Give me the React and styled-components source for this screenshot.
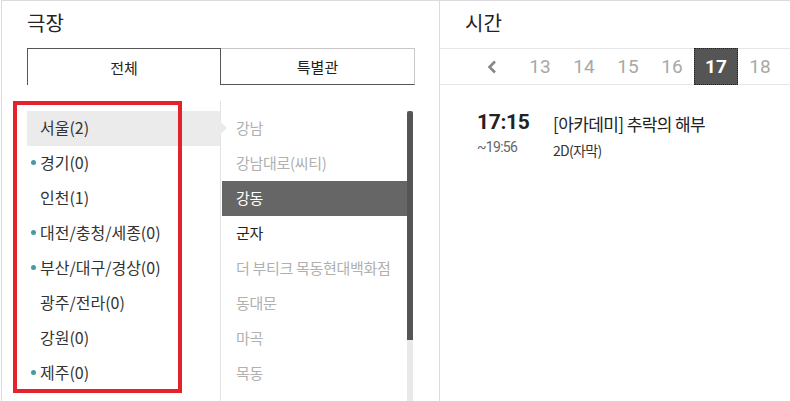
import React from "react";
import styled, { createGlobalStyle } from "styled-components";

const Global = createGlobalStyle`
  html, body { margin: 0; padding: 0; overflow: hidden; background: #fff; }
  body { font-family: "Noto Sans CJK KR", "Noto Sans", sans-serif; color: #222; }
  * { box-sizing: border-box; }
`;

const Page = styled.div`
  display: flex;
  margin-left: 1px;
  height: 401px;
  border-top: 1px solid #dcdcdc;
  border-left: 1px solid #dcdcdc;
  overflow: hidden;
`;

const LeftPanel = styled.section`
  width: 438px;
  flex: none;
  padding-left: 25px;
  border-right: 1px solid #dcdcdc;
`;

const RightPanel = styled.section`
  flex: 1;
  min-width: 0;
`;

const Title = styled.h2`
  margin: 0;
  height: 47px;
  line-height: 44px;
  font-size: 20px;
  font-weight: 400;
  color: #222;
  padding-left: ${(p) => p.$indent || 0}px;
`;

const Tabs = styled.div`
  display: grid;
  grid-template-columns: 194px 194px;
  height: 37px;
`;

const Tab = styled.div`
  display: flex;
  align-items: center;
  justify-content: center;
  font-size: 15px;
  color: #222;
  border: 1px solid ${(p) => (p.$active ? "#555" : "#c8c8c8")};
  border-bottom: ${(p) => (p.$active ? "none" : "1px solid #555")};
  border-left: ${(p) => (p.$active ? "1px solid #555" : "none")};
`;

const Body = styled.div`
  position: relative;
  display: flex;
  margin-top: 16px;
  height: 300px;
`;

const RegionList = styled.ul`
  list-style: none;
  margin: 0;
  padding: 10px 0 0;
  width: 193px;
  flex: none;
`;

const RegionItem = styled.li`
  position: relative;
  height: 35px;
  line-height: 32px;
  padding: 0 0 3px 13px;
  font-size: 16px;
  color: #333;
  background: ${(p) => (p.$active ? "#ebebeb" : "transparent")};
  ${(p) =>
    p.$active &&
    `
    &::after {
      content: "";
      position: absolute;
      right: -7px;
      top: 10px;
      border-top: 7px solid transparent;
      border-bottom: 7px solid transparent;
      border-left: 7px solid #ebebeb;
      z-index: 2;
    }
  `}
  ${(p) =>
    p.$dot &&
    `
    &::before {
      content: "";
      position: absolute;
      left: 4px;
      top: 14px;
      width: 5px;
      height: 5px;
      border-radius: 50%;
      background: #4b97a2;
    }
  `}
`;

const TheaterColumn = styled.div`
  display: flex;
  border-left: 1px solid #e3e3e3;
  padding-left: 1px;
`;

const TheaterList = styled.ul`
  list-style: none;
  margin: 0;
  padding: 10px 0 0;
  width: 185px;
`;

const TheaterItem = styled.li`
  height: 35px;
  line-height: 33px;
  padding-left: 14px;
  font-size: 15px;
  white-space: nowrap;
  overflow: hidden;
  letter-spacing: -0.3px;
  color: ${(p) => (p.$active ? "#fff" : p.$disabled ? "#b0b0b0" : "#222")};
  background: ${(p) => (p.$active ? "#666" : "transparent")};
`;

const ScrollTrack = styled.div`
  margin-top: 10px;
  width: 6px;
  background: #e9e9e9;
  height: 300px;
`;

const ScrollThumb = styled.div`
  height: 229px;
  background: #555;
  border-radius: 2px 2px 0 0;
`;

const Annotation = styled.div`
  position: absolute;
  left: -14px;
  top: 0;
  width: 169px;
  height: 292px;
  border: 4px solid #e3222b;
  pointer-events: none;
  z-index: 3;
`;

const DateBar = styled.div`
  display: flex;
  align-items: stretch;
  height: 37px;
  padding-left: 30px;
  border-top: 1px solid #e6e6e6;
  border-bottom: 1px solid #e6e6e6;
`;

const DateCell = styled.div`
  width: ${(p) => (p.$nav ? 48 : 44)}px;
  padding-right: ${(p) => (p.$nav ? 4 : 0)}px;
  flex: none;
  display: flex;
  align-items: center;
  justify-content: center;
  font-family: Roboto, "Noto Sans", sans-serif;
  font-size: 19px;
  color: ${(p) => (p.$active ? "#fff" : "#a8a8a8")};
  font-weight: ${(p) => (p.$active ? 700 : 400)};
  background: ${(p) => (p.$active ? "#555" : "transparent")};
  margin: ${(p) => (p.$active ? "-1px 0" : "0")};
  outline: ${(p) => (p.$active ? "1px dotted #222" : "none")};
  outline-offset: -1px;
`;

const Showtime = styled.div`
  display: grid;
  grid-template-columns: 76px 1fr;
  padding: 25px 0 0 37px;
`;

const TimeCol = styled.div`
  display: flex;
  flex-direction: column;
`;

const StartTime = styled.div`
  font-family: Roboto, "Noto Sans", sans-serif;
  font-weight: 700;
  font-size: 21px;
  line-height: 24px;
  color: #222;
  letter-spacing: -0.3px;
`;

const EndTime = styled.div`
  margin-top: 5px;
  font-family: Roboto, "Noto Sans", sans-serif;
  font-size: 14px;
  line-height: 16px;
  color: #666;
  letter-spacing: -0.7px;
`;

const MovieCol = styled.div`
  display: flex;
  flex-direction: column;
`;

const MovieTitle = styled.div`
  margin-top: 2px;
  font-size: 17px;
  line-height: 24px;
  color: #222;
  letter-spacing: -0.6px;
`;

const MovieFormat = styled.div`
  margin-top: 5px;
  font-size: 14px;
  line-height: 18px;
  color: #333;
  letter-spacing: -0.7px;
`;

const Chevron = () => (
  <svg width="12" height="14" viewBox="0 0 12 14">
    <path d="M9 1.5 L3.5 7 L9 12.5" fill="none" stroke="#888" strokeWidth="2.6" />
  </svg>
);

const regions = [
  { name: "서울(2)", active: true },
  { name: "경기(0)", dot: true },
  { name: "인천(1)" },
  { name: "대전/충청/세종(0)", dot: true },
  { name: "부산/대구/경상(0)", dot: true },
  { name: "광주/전라(0)" },
  { name: "강원(0)" },
  { name: "제주(0)", dot: true },
];

const theaters = [
  { name: "강남", disabled: true },
  { name: "강남대로(씨티)", disabled: true },
  { name: "강동", active: true },
  { name: "군자" },
  { name: "더 부티크 목동현대백화점", disabled: true },
  { name: "동대문", disabled: true },
  { name: "마곡", disabled: true },
  { name: "목동", disabled: true },
  { name: "상봉", disabled: true },
];

const dates = ["13", "14", "15", "16", "17", "18"];

export default function App() {
  return (
    <>
      <Global />
      <Page>
        <LeftPanel>
          <Title>극장</Title>
          <Tabs>
            <Tab $active>전체</Tab>
            <Tab>특별관</Tab>
          </Tabs>
          <Body>
            <RegionList>
              {regions.map((r) => (
                <RegionItem key={r.name} $active={r.active} $dot={r.dot}>
                  {r.name}
                </RegionItem>
              ))}
            </RegionList>
            <TheaterColumn>
              <TheaterList>
                {theaters.map((t) => (
                  <TheaterItem key={t.name} $active={t.active} $disabled={t.disabled}>
                    {t.name}
                  </TheaterItem>
                ))}
              </TheaterList>
              <ScrollTrack>
                <ScrollThumb />
              </ScrollTrack>
            </TheaterColumn>
            <Annotation />
          </Body>
        </LeftPanel>
        <RightPanel>
          <Title $indent={25}>시간</Title>
          <DateBar>
            <DateCell $nav>
              <Chevron />
            </DateCell>
            {dates.map((d) => (
              <DateCell key={d} $active={d === "17"}>
                {d}
              </DateCell>
            ))}
          </DateBar>
          <Showtime>
            <TimeCol>
              <StartTime>17:15</StartTime>
              <EndTime>~19:56</EndTime>
            </TimeCol>
            <MovieCol>
              <MovieTitle>[아카데미] 추락의 해부</MovieTitle>
              <MovieFormat>2D(자막)</MovieFormat>
            </MovieCol>
          </Showtime>
        </RightPanel>
      </Page>
    </>
  );
}
